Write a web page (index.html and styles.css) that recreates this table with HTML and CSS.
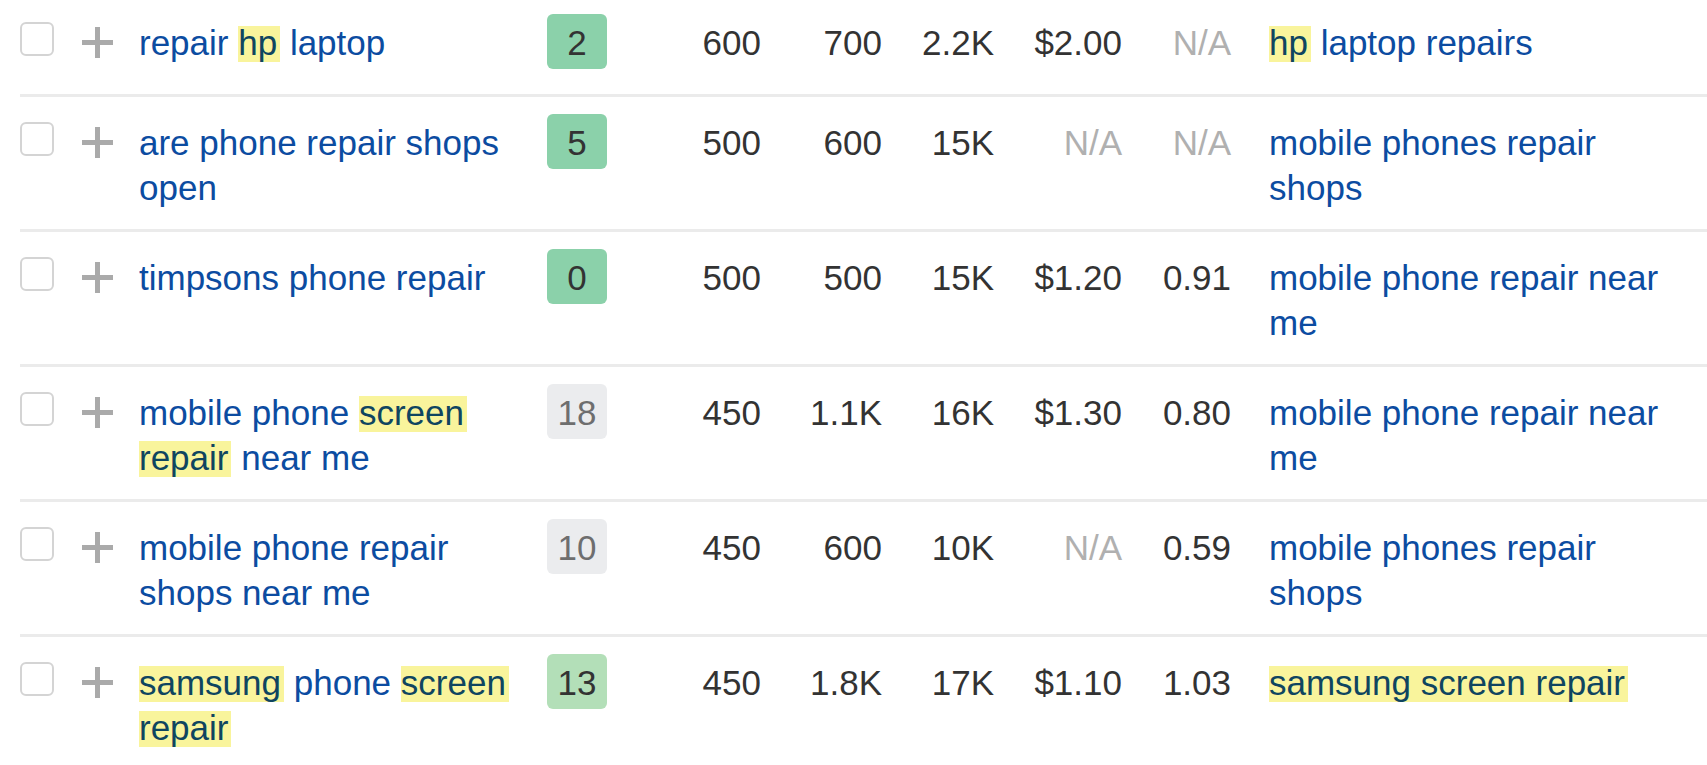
FILE: index.html
```html
<!DOCTYPE html>
<html lang="en">
<head>
<meta charset="utf-8">
<title>Keywords</title>
<link rel="stylesheet" href="styles.css">
</head>
<body>
<div class="table">
  <div class="row">
    <div class="cell cb"><span class="checkbox"></span></div>
    <div class="cell add"><svg width="31" height="31" viewBox="0 0 31 31"><path d="M15.5 0V31M0 15.5H31" stroke="#aaaaaa" stroke-width="5" fill="none"/></svg></div>
    <div class="cell kw"><a href="#">repair <mark>hp</mark> laptop</a></div>
    <div class="cell kd"><span class="badge green">2</span></div>
    <div class="cell num">600</div>
    <div class="cell num">700</div>
    <div class="cell num">2.2K</div>
    <div class="cell num">$2.00</div>
    <div class="cell num na">N/A</div>
    <div class="cell parent"><a href="#"><mark>hp</mark> laptop repairs</a></div>
  </div>
  <div class="row">
    <div class="cell cb"><span class="checkbox"></span></div>
    <div class="cell add"><svg width="31" height="31" viewBox="0 0 31 31"><path d="M15.5 0V31M0 15.5H31" stroke="#aaaaaa" stroke-width="5" fill="none"/></svg></div>
    <div class="cell kw"><a href="#">are phone repair shops open</a></div>
    <div class="cell kd"><span class="badge green">5</span></div>
    <div class="cell num">500</div>
    <div class="cell num">600</div>
    <div class="cell num">15K</div>
    <div class="cell num na">N/A</div>
    <div class="cell num na">N/A</div>
    <div class="cell parent"><a href="#">mobile phones repair shops</a></div>
  </div>
  <div class="row">
    <div class="cell cb"><span class="checkbox"></span></div>
    <div class="cell add"><svg width="31" height="31" viewBox="0 0 31 31"><path d="M15.5 0V31M0 15.5H31" stroke="#aaaaaa" stroke-width="5" fill="none"/></svg></div>
    <div class="cell kw"><a href="#">timpsons phone repair</a></div>
    <div class="cell kd"><span class="badge green">0</span></div>
    <div class="cell num">500</div>
    <div class="cell num">500</div>
    <div class="cell num">15K</div>
    <div class="cell num">$1.20</div>
    <div class="cell num">0.91</div>
    <div class="cell parent"><a href="#">mobile phone repair near me</a></div>
  </div>
  <div class="row">
    <div class="cell cb"><span class="checkbox"></span></div>
    <div class="cell add"><svg width="31" height="31" viewBox="0 0 31 31"><path d="M15.5 0V31M0 15.5H31" stroke="#aaaaaa" stroke-width="5" fill="none"/></svg></div>
    <div class="cell kw"><a href="#">mobile phone <mark>screen</mark> <mark>repair</mark> near me</a></div>
    <div class="cell kd"><span class="badge grey">18</span></div>
    <div class="cell num">450</div>
    <div class="cell num">1.1K</div>
    <div class="cell num">16K</div>
    <div class="cell num">$1.30</div>
    <div class="cell num">0.80</div>
    <div class="cell parent"><a href="#">mobile phone repair near me</a></div>
  </div>
  <div class="row">
    <div class="cell cb"><span class="checkbox"></span></div>
    <div class="cell add"><svg width="31" height="31" viewBox="0 0 31 31"><path d="M15.5 0V31M0 15.5H31" stroke="#aaaaaa" stroke-width="5" fill="none"/></svg></div>
    <div class="cell kw"><a href="#">mobile phone repair shops near me</a></div>
    <div class="cell kd"><span class="badge grey">10</span></div>
    <div class="cell num">450</div>
    <div class="cell num">600</div>
    <div class="cell num">10K</div>
    <div class="cell num na">N/A</div>
    <div class="cell num">0.59</div>
    <div class="cell parent"><a href="#">mobile phones repair shops</a></div>
  </div>
  <div class="row">
    <div class="cell cb"><span class="checkbox"></span></div>
    <div class="cell add"><svg width="31" height="31" viewBox="0 0 31 31"><path d="M15.5 0V31M0 15.5H31" stroke="#aaaaaa" stroke-width="5" fill="none"/></svg></div>
    <div class="cell kw"><a href="#"><mark>samsung</mark> phone <mark>screen</mark> <mark>repair</mark></a></div>
    <div class="cell kd"><span class="badge light">13</span></div>
    <div class="cell num">450</div>
    <div class="cell num">1.8K</div>
    <div class="cell num">17K</div>
    <div class="cell num">$1.10</div>
    <div class="cell num">1.03</div>
    <div class="cell parent"><a href="#"><mark>samsung screen repair</mark></a></div>
  </div>
</div>
</body>
</html>
```

FILE: styles.css
```css
html {
  overflow: hidden;
}

body {
  margin: 0;
  background: #ffffff;
  font-family: "Liberation Sans", Arial, Helvetica, sans-serif;
  font-size: 35px;
  color: #333333;
}

.table {
  margin: -3px 0 0 20px;
}

.row {
  display: grid;
  grid-template-columns: 62px 57px 408px 60px 154px 121px 112px 128px 109px 1fr;
  align-items: start;
  padding: 17px 0 19px;
  border-bottom: 3px solid #ebebeb;
}

.checkbox {
  display: block;
  width: 34px;
  height: 34px;
  box-sizing: border-box;
  border: 2px solid #d4d4d4;
  border-radius: 6px;
  margin-top: 8px;
}

.add svg {
  display: block;
  margin-top: 13px;
}

.kw,
.num,
.parent {
  margin-top: 6px;
  line-height: 45px;
}

.kw {
  padding-right: 16px;
}

.parent {
  padding-left: 38px;
  padding-right: 40px;
}

.num {
  text-align: right;
  white-space: nowrap;
}

.na {
  color: #b0b0b0;
}

a {
  color: #0c4ca1;
  text-decoration: none;
}

mark {
  color: #0f4560;
  background: linear-gradient(#f9f49c, #f9f49c) no-repeat left bottom / 100% 36px;
  padding-right: 3px;
}

.badge {
  display: block;
  width: 60px;
  height: 55px;
  box-sizing: border-box;
  padding-top: 2px;
  line-height: 53px;
  text-align: center;
  border-radius: 6px;
  margin-bottom: 6px;
  color: #333333;
}

.green {
  background: #8bd1aa;
}

.light {
  background: #b3dfb8;
}

.grey {
  background: #ebecee;
  color: #6e6e6e;
}
```
